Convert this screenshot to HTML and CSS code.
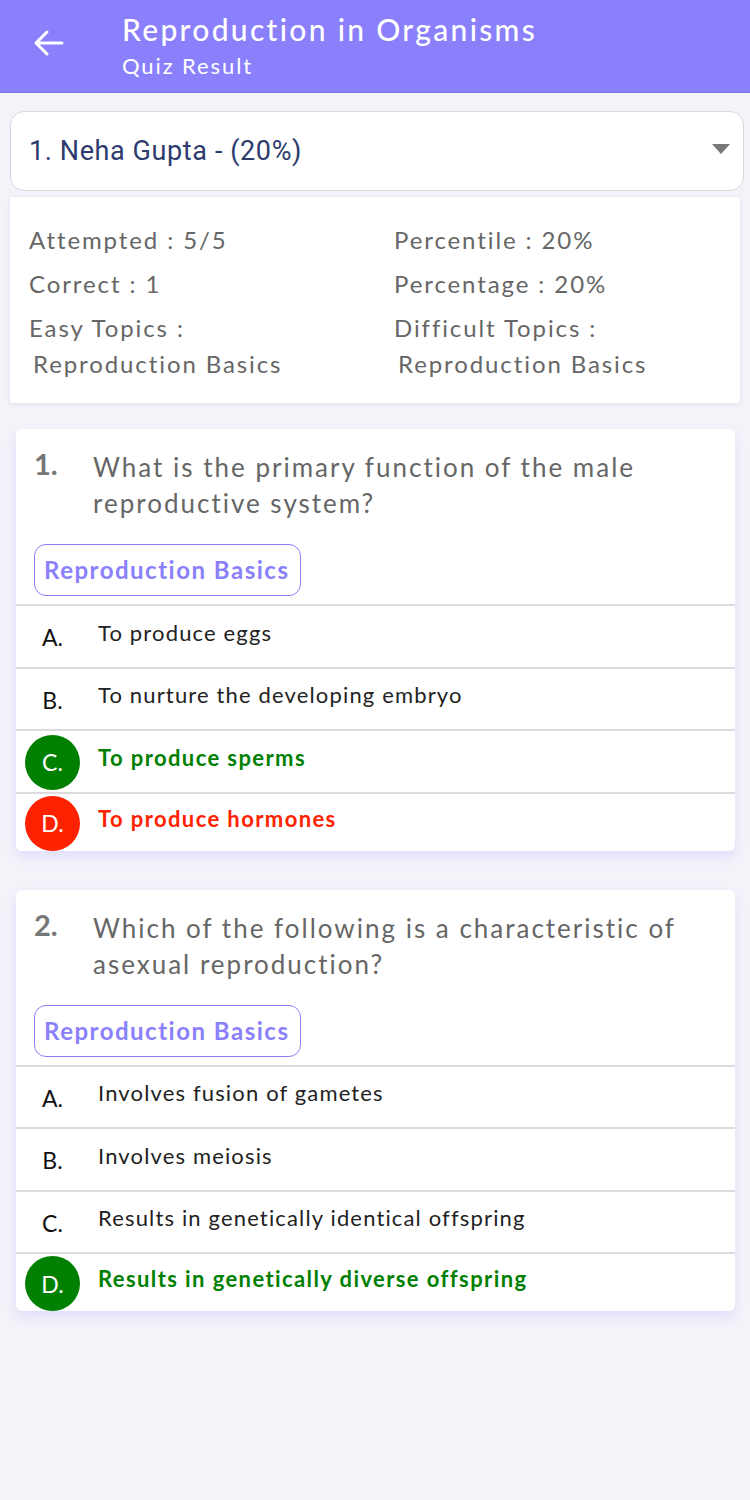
FILE: index.html
```html
<!DOCTYPE html>
<html>
<head>
<meta charset="utf-8">
<link rel="stylesheet" href="styles.css">
</head>
<body>
<header class="appbar">
  <svg class="back" width="32" height="28" viewBox="0 0 32 28"><path d="M30 14H4M15 3L4 14l11 11" fill="none" stroke="#fff" stroke-width="3" stroke-linecap="round" stroke-linejoin="round"/></svg>
  <div class="titles">
    <div class="title">Reproduction in Organisms</div>
    <div class="subtitle">Quiz Result</div>
  </div>
</header>

<div class="select">
  <span class="select-text">1. Neha Gupta - (20%)</span>
  <span class="caret"></span>
</div>

<div class="stats">
  <div class="stat">Attempted : 5/5</div>
  <div class="stat">Percentile : 20%</div>
  <div class="stat">Correct : 1</div>
  <div class="stat">Percentage : 20%</div>
  <div class="stat">Easy Topics :<div class="topic">Reproduction Basics</div></div>
  <div class="stat">Difficult Topics :<div class="topic">Reproduction Basics</div></div>
</div>

<div class="qcard">
  <div class="qhead">
    <div class="qnum">1.</div>
    <div class="qtext">What is the primary function of the male reproductive system?</div>
  </div>
  <div class="tag">Reproduction Basics</div>
  <div class="opt"><span class="letter">A.</span><span class="otext">To produce eggs</span></div>
  <div class="opt"><span class="letter">B.</span><span class="otext">To nurture the developing embryo</span></div>
  <div class="opt correct"><span class="letter">C.</span><span class="otext">To produce sperms</span></div>
  <div class="opt wrong"><span class="letter">D.</span><span class="otext">To produce hormones</span></div>
</div>

<div class="qcard">
  <div class="qhead">
    <div class="qnum">2.</div>
    <div class="qtext">Which of the following is a characteristic of asexual reproduction?</div>
  </div>
  <div class="tag">Reproduction Basics</div>
  <div class="opt"><span class="letter">A.</span><span class="otext">Involves fusion of gametes</span></div>
  <div class="opt"><span class="letter">B.</span><span class="otext">Involves meiosis</span></div>
  <div class="opt"><span class="letter">C.</span><span class="otext">Results in genetically identical offspring</span></div>
  <div class="opt correct"><span class="letter">D.</span><span class="otext">Results in genetically diverse offspring</span></div>
</div>
</body>
</html>
```
FILE: styles.css
```css
* { box-sizing: border-box; }
body {
  margin: 0;
  background: #f3f3fa;
  font-family: Lato, "Noto Sans", sans-serif;
  width: 750px;
  min-height: 1500px;
}
.appbar {
  height: 93px;
  background: #8b80fc;
  border-bottom: 1px solid #7f74f2;
  display: flex;
  align-items: center;
  color: #fff;
}
.back { margin-left: 32px; margin-right: 58px; margin-top: -6px; }
.titles { display: flex; flex-direction: column; }
.title { font-size: 30px; line-height: 36px; font-weight: 500; letter-spacing: 2.3px; }
.subtitle { font-size: 22px; line-height: 30px; margin-top: 4px; letter-spacing: 1.9px; }

.select {
  margin: 18px 6px 0 10px;
  height: 80px;
  background: #fff;
  border: 1px solid #d8d8e0;
  border-radius: 14px;
  display: flex;
  align-items: center;
  justify-content: space-between;
  padding: 0 13px 0 18px;
}
.select-text {
  font-family: Roboto, sans-serif;
  font-size: 27px;
  letter-spacing: 0.6px;
  color: #2d3b6e;
}
.caret {
  width: 0; height: 0;
  border-left: 9px solid transparent;
  border-right: 9px solid transparent;
  border-top: 10px solid #777;
  margin-top: -4px;
}

.stats {
  margin: 6px 10px 0 10px;
  background: #fff;
  box-shadow: 0 1px 4px rgba(100, 100, 160, 0.15);
  border-radius: 3px;
  padding: 26px 19px 20px 19px;
  display: grid;
  grid-template-columns: 365px 1fr;
  row-gap: 10px;
  color: #666;
  font-size: 24px;
  letter-spacing: 1.9px;
}
.stat { line-height: 34px; }
.topic { margin-left: 4px; line-height: 38px; }

.qcard {
  margin: 26px 15px 0 16px;
  background: #fff;
  border-radius: 6px;
  box-shadow: 0 6px 12px rgba(120, 110, 240, 0.15);
  overflow: hidden;
}
.qcard + .qcard { margin-top: 39px; }
.qhead {
  display: flex;
  padding: 20px 18px 0 18px;
}
.qnum {
  width: 59px;
  flex: none;
  font-size: 29px;
  font-weight: 700;
  color: #777;
  line-height: 36px;
  margin-top: -3px;
}
.qtext {
  font-size: 26px;
  line-height: 36px;
  color: #666;
  letter-spacing: 2px;
}
.tag {
  display: inline-block;
  margin: 23px 0 8px 18px;
  border: 1.5px solid #8b80fc;
  border-radius: 12px;
  height: 52px;
  line-height: 49px;
  padding: 0 11px 0 9px;
  color: #8b80fc;
  font-size: 24px;
  font-weight: 700;
  letter-spacing: 1.5px;
}
.opt {
  border-top: 2px solid #dcdcdf;
  height: 62.5px;
  display: flex;
  align-items: center;
  padding-left: 9px;
}
.opt:last-child { height: 59px; }
.letter {
  width: 55px;
  height: 55px;
  border-radius: 50%;
  display: flex;
  align-items: center;
  justify-content: center;
  font-size: 23px;
  color: #111;
  flex: none;
  margin-top: 2px;
}
.otext {
  margin-left: 18px;
  font-size: 22px;
  color: #222;
  margin-top: -8px;
  letter-spacing: 1.15px;
}
.correct .letter { background: #008000; color: #fff; }
.correct .otext { color: #008000; font-weight: 700; letter-spacing: 1.4px; }
.wrong .letter { background: #ff2200; color: #fff; }
.wrong .otext { color: #ff2200; font-weight: 700; letter-spacing: 1.4px; }
```
